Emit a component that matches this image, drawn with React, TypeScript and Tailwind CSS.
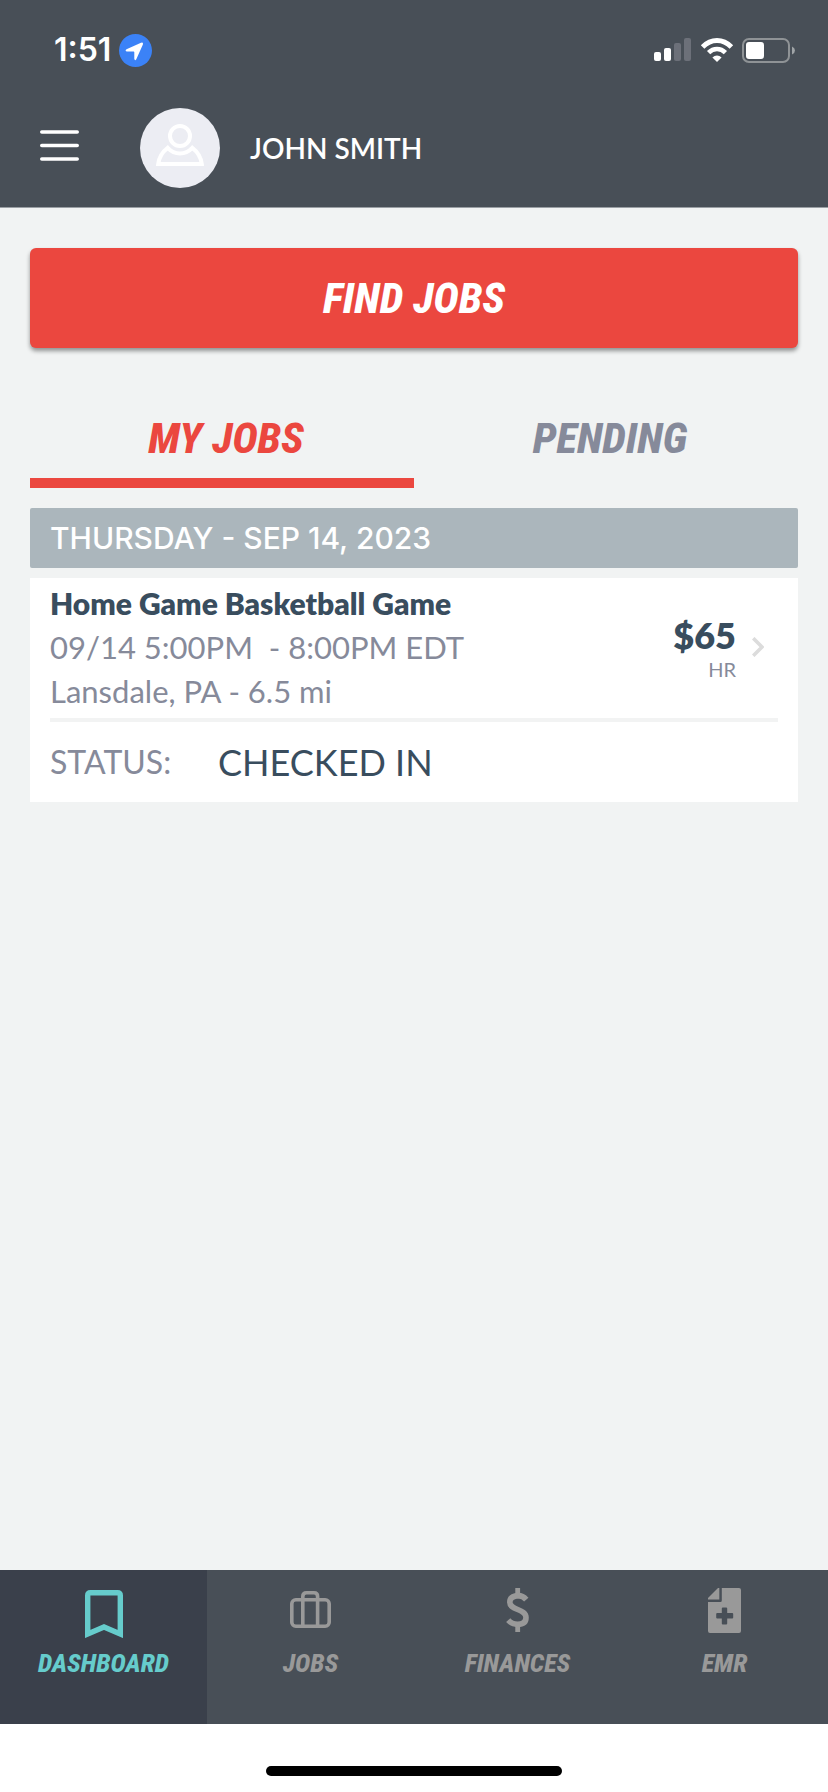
import { useState } from "react"
import type { ReactNode } from "react"
import clsx from "clsx"

const display = "font-['Liberation_Sans_Narrow','Roboto_Condensed',sans-serif] font-extrabold italic"

interface NavItem {
    name: string
    icon: ReactNode
}

function BookmarkIcon() {
    return (
        <svg width="38" height="48" viewBox="0 0 38 48" fill="none">
            <path d="M2.7 44V5.5Q2.7 2.7 5.5 2.7H32.5Q35.3 2.7 35.3 5.5V44L19 37Z" stroke="currentColor" strokeWidth="5.4" />
        </svg>
    )
}

function SuitcaseIcon() {
    return (
        <svg width="41" height="42" viewBox="0 -3 41 42" fill="none" stroke="currentColor" strokeWidth="3.6">
            <rect x="1.8" y="8.8" width="37.4" height="26.4" rx="4" />
            <path d="M12.8 35V5.5Q12.8 1.8 16.5 1.8H24Q27.6 1.8 27.6 5.5V35" />
        </svg>
    )
}

function DollarIcon() {
    return (
        <svg width="23" height="44" viewBox="0 0 23 44" fill="none" stroke="currentColor">
            <path d="M20.3 11.6Q17 7.6 12 7.6Q3.8 8.2 3.8 14.2C3.8 22.4 20 20.6 20 29.5Q20 36.4 11.5 36.4Q6 36.4 2.2 32.2" strokeWidth="5.6" />
            <path d="M11.7 0V7M11.7 37V44" strokeWidth="4.8" />
        </svg>
    )
}

function RecordIcon() {
    return (
        <svg width="33" height="45" viewBox="0 0 33 45" fill="currentColor">
            <path d="M0 11.5V10L10 0H11.3V11.5Z" />
            <path
                fillRule="evenodd"
                d="M13.8 0H31Q33 0 33 2V43Q33 45 31 45H2Q0 45 0 43V14H12.3Q13.8 14 13.8 12.5ZM14.8 19.5Q13.8 19.5 13.8 20.5V25H9.2Q8.2 25 8.2 26V29.5Q8.2 30.5 9.2 30.5H13.8V35.5Q13.8 36.5 14.8 36.5H18.2Q19.2 36.5 19.2 35.5V30.5H24.2Q25.2 30.5 25.2 29.5V26Q25.2 25 24.2 25H19.2V20.5Q19.2 19.5 18.2 19.5Z"
            />
        </svg>
    )
}

function StatusBar() {
    return (
        <div className="flex items-center justify-between h-[100px] pl-[54px] pr-8">
            <div className="flex items-center gap-2">
                <span className="font-['Inter',sans-serif] text-[32px] leading-10 font-semibold">1:51</span>
                <svg width="33" height="33" viewBox="0 0 33 33">
                    <circle cx="16.5" cy="16.5" r="16.5" fill="#3b82f7" />
                    <path d="M7.5 15.3 22 8.8Q24.6 7.9 23.9 10.6L17.3 25.2Q16 27.2 15.3 25V18.2Q15.3 17.5 14.6 17.5H8Q5.5 17 7.5 15.3Z" fill="#fff" />
                </svg>
            </div>
            <div className="flex items-center gap-2">
                <svg width="38" height="24" viewBox="0 0 38 24" fill="#fff">
                    <rect x="0" y="14" width="7" height="9" rx="2" />
                    <rect x="10" y="10" width="7" height="13" rx="2" />
                    <rect x="20" y="5" width="7" height="18" rx="2" fill="#6c7079" />
                    <rect x="30" y="0" width="7" height="23" rx="2" fill="#6c7079" />
                </svg>
                <svg width="34" height="24" viewBox="0 0 34 24" fill="none" stroke="#fff" strokeWidth="5">
                    <path d="M2.6 9Q9 2.6 17 2.6T31.4 9" />
                    <path d="M8.6 14.6Q12.2 11 17 11T25.4 14.6" strokeWidth="4.6" />
                    <path d="M12.4 19.4Q14.4 17.4 17 17.4T21.6 19.4L17 24Z" fill="#fff" stroke="none" />
                </svg>
                <svg width="54" height="25" viewBox="0 0 54 25">
                    <rect x="1" y="1" width="46" height="23" rx="6" fill="none" stroke="#8f9396" strokeWidth="2" />
                    <rect x="4" y="4" width="18" height="17" rx="3" fill="#fff" />
                    <path d="M50 8.5Q53 10 53 12.5T50 16.5Z" fill="#a0a4a7" />
                </svg>
            </div>
        </div>
    )
}

function Header() {
    return (
        <header className="bg-[#484f57] text-white border-b border-[#9a9fa4]">
            <StatusBar />
            <div className="flex items-center pl-10 pt-2 pb-[19px]">
                <button aria-label="Open menu" className="pb-1 cursor-pointer">
                    <svg width="40" height="32" viewBox="0 0 40 32" stroke="#fff" strokeWidth="3.6" strokeLinecap="round">
                        <path d="M1.8 2H37.2M1.8 15.5H37.2M1.8 29H37.2" />
                    </svg>
                </button>
                <svg className="ml-[60px]" width="80" height="80" viewBox="0 0 80 80" fill="none" stroke="#fff" strokeWidth="4">
                    <circle cx="40" cy="40" r="40" fill="#ecedf3" stroke="none" />
                    <circle cx="40" cy="28" r="10" />
                    <path d="M27.7 39.8Q19.5 46 18.2 56H61.8Q60.5 46 52.3 39.8Q47 45.4 40 45.4T27.7 39.8Z" />
                </svg>
                <span className="ml-[30px] text-[28px] leading-9 font-semibold">JOHN SMITH</span>
            </div>
        </header>
    )
}

function JobCard() {
    return (
        <a href="#" className="block bg-white px-5 pb-[18px] mt-[10px]">
            <div className="flex items-center border-b-4 border-[#f2f3f3] pt-[3px] pb-[5px] text-[#868a9a]">
                <div className="flex-1 text-[31px] leading-[44px]">
                    <h3 className="text-[30px] font-extrabold text-[#394d5e]">Home Game Basketball Game</h3>
                    <p className="whitespace-pre">09/14 5:00PM  - 8:00PM EDT</p>
                    <p>Lansdale, PA - 6.5 mi</p>
                </div>
                <div className="text-right pt-1">
                    <p className="text-[36px] leading-10 font-extrabold text-[#394d5e]">$65</p>
                    <p className="text-xl leading-7">HR</p>
                </div>
                <svg className="ml-4 mr-[14px]" width="12" height="20" viewBox="0 0 12 20" fill="none" stroke="#dcdcdc" strokeWidth="3.6">
                    <path d="M1.2 1.2 10 10 1.2 18.8" />
                </svg>
            </div>
            <div className="flex items-center pt-[18px] leading-[44px]">
                <span className="w-[168px] text-[32px] text-[#868a9a]">STATUS:</span>
                <span className="text-[36px] text-[#394d5e]">CHECKED IN</span>
            </div>
        </a>
    )
}

const tabs = ["MY JOBS", "PENDING"]

const navItems: NavItem[] = [
    { name: "DASHBOARD", icon: <BookmarkIcon /> },
    { name: "JOBS", icon: <SuitcaseIcon /> },
    { name: "FINANCES", icon: <DollarIcon /> },
    { name: "EMR", icon: <RecordIcon /> },
]

export default function App() {
    const [activeTab, setActiveTab] = useState("MY JOBS")
    const [activeNav, setActiveNav] = useState("DASHBOARD")

    return (
        <div className="min-h-screen flex flex-col bg-[#f1f3f3] font-['Lato',sans-serif]">
            <Header />
            <main className="flex-1 px-[30px] pt-10">
                <button className={clsx(display, "w-full h-[100px] rounded-md bg-[#eb473f] text-white text-[43px] shadow-[0_3px_4px_rgba(0,0,0,0.4)] cursor-pointer")}>
                    FIND JOBS
                </button>
                <div role="tablist" className="flex mt-10">
                    {tabs.map((tab) => (
                        <button
                            key={tab}
                            role="tab"
                            aria-selected={activeTab === tab}
                            onClick={() => setActiveTab(tab)}
                            className={clsx(
                                display,
                                "flex-1 h-[100px] pt-[10px] pl-2 border-b-10 text-[43px] cursor-pointer",
                                activeTab === tab ? "text-[#eb473f] border-[#eb473f]" : "text-[#868a9a] border-transparent"
                            )}
                        >
                            {tab}
                        </button>
                    ))}
                </div>
                <h2 className="mt-5 px-5 rounded-xs bg-[#abb6bc] text-white text-[30px] leading-[60px] font-medium font-['Inter',sans-serif]">
                    THURSDAY - SEP 14, 2023
                </h2>
                <JobCard />
            </main>
            <nav className="grid grid-cols-4 bg-[#484f57]">
                {navItems.map((item) => (
                    <button
                        key={item.name}
                        onClick={() => setActiveNav(item.name)}
                        className={clsx(
                            "flex flex-col items-center pt-[18px] h-[154px] cursor-pointer",
                            activeNav === item.name ? "bg-[#3a404b] text-[#66cccc]" : "text-[#999]"
                        )}
                    >
                        <span className={clsx("flex items-start justify-center h-[50px]", activeNav === item.name && "pt-[2px]")}>{item.icon}</span>
                        <span className={clsx(display, "mt-[7px] text-[26px] leading-9")}>{item.name}</span>
                    </button>
                ))}
            </nav>
            <div className="flex justify-center bg-white pt-[42px] pb-4">
                <div className="w-[296px] h-[10px] rounded-full bg-black" />
            </div>
        </div>
    )
}
